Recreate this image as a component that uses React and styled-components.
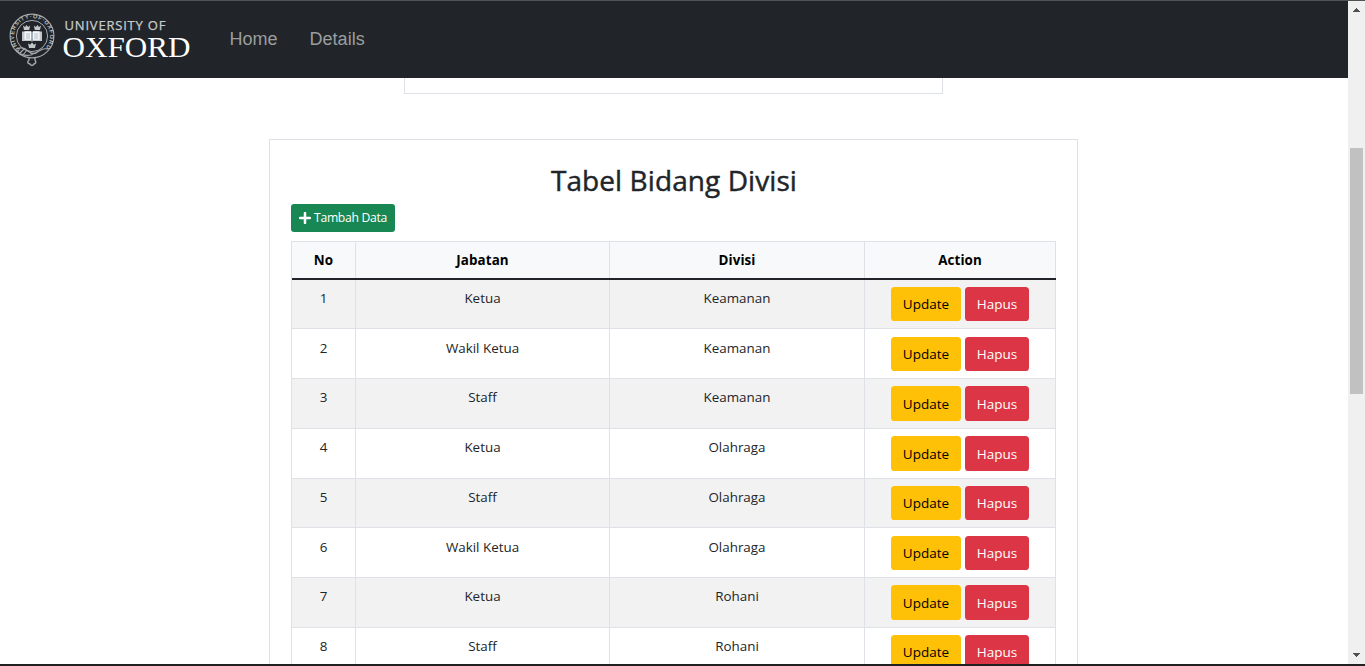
import React from 'react';
import styled, { createGlobalStyle } from 'styled-components';

const GlobalStyle = createGlobalStyle`
  *, *::before, *::after { box-sizing: border-box; }
  html, body { margin: 0; height: 666px; overflow: hidden; background: #fff; }
`;

const Window = styled.div`
  display: flex;
  flex-direction: column;
  width: 1365px;
  height: 666px;
  overflow: hidden;
  border-top: 1px solid #505254;
  border-bottom: 2px solid #212023;
  background: #fff;
  color: #212529;
  font-family: 'Open Sans', 'Noto Sans', sans-serif;
  font-size: 13.4px;
`;

const Viewport = styled.div`
  display: flex;
  flex: 1;
  min-height: 0;
`;

const Page = styled.div`
  display: flex;
  flex-direction: column;
  flex: 1;
  min-width: 0;
`;

const Navbar = styled.nav`
  display: flex;
  flex: none;
  align-items: center;
  height: 77px;
  padding-left: 9px;
  background: #212529;
`;

const Brand = styled.svg`
  display: block;
  flex: none;
  width: 189px;
  height: 77px;
`;

const NavLinks = styled.div`
  display: flex;
  gap: 32px;
  padding-left: 31.6px;
`;

const NavLink = styled.a`
  color: #9b9d9e;
  font: 18px/27px 'Liberation Sans', Arial, sans-serif;
`;

const Content = styled.main`
  display: flex;
  flex-direction: column;
  flex: 1;
  min-height: 0;
  overflow: hidden;
`;

const PreviousCard = styled.div`
  flex: none;
  width: 539px;
  height: 16px;
  margin-left: 404px;
  border: 1px solid #dee2e6;
  border-top: 0;
`;

const Card = styled.section`
  flex: none;
  width: 809px;
  height: 700px;
  margin: 45px 0 0 269px;
  padding: 22px 21px 0;
  border: 1px solid #dee2e6;
`;

const Title = styled.h1`
  height: 36px;
  margin: 0;
  padding-left: 1px;
  font-size: 28px;
  font-weight: 500;
  line-height: 36px;
  letter-spacing: 0.08px;
  text-align: center;
  -webkit-text-stroke: 0.45px #212529;
`;

const AddButton = styled.button`
  display: flex;
  align-items: center;
  gap: 3px;
  width: 104px;
  height: 28px;
  margin: 6px 0 9px;
  padding: 0 0 1px 8px;
  border: 0;
  border-radius: 3px;
  background: #198754;
  color: #fff;
  font: 12.2px/18px 'Open Sans', sans-serif;
  letter-spacing: -0.3px;
  white-space: nowrap;
`;

const Table = styled.div`
  width: 765px;
  border-left: 1px solid #dee2e6;
`;

const Row = styled.div`
  display: grid;
  grid-template-columns: 64px 254px 255px 191px;
  height: 49.72px;
  border-bottom: 1px solid #dee2e6;
  background: ${(p) => (p.$striped ? '#f2f2f2' : '#fff')};
`;

const HeadRow = styled(Row)`
  height: 38.75px;
  border-top: 1px solid #dee2e6;
  border-bottom: 2px solid #212529;
  background: #f8f9fa;
  color: #000;
  font-weight: 700;
  letter-spacing: 0.1px;
`;

const Cell = styled.div`
  padding: 8.3px 0 0;
  border-right: 1px solid #dee2e6;
  line-height: 21.6px;
  text-align: center;
`;

const ActionCell = styled(Cell)`
  display: flex;
  justify-content: center;
  gap: 4px;
  padding-top: 7.3px;
`;

const ActionButton = styled.button`
  width: ${(p) => (p.$danger ? '64px' : '70px')};
  height: 34.4px;
  padding: 1.9px 0 0;
  border: 0;
  border-radius: 3.6px;
  background: ${(p) => (p.$danger ? '#dc3545' : '#ffc107')};
  color: ${(p) => (p.$danger ? '#fff' : '#000')};
  font: 13.5px/21.6px 'Open Sans', sans-serif;
`;

const Scrollbar = styled.div`
  display: flex;
  flex: none;
  flex-direction: column;
  align-items: center;
  width: 17px;
  background: #f0f0f0;
`;

const ScrollArrow = styled.svg`
  display: block;
  width: 17px;
  height: 17px;
`;

const ScrollThumb = styled.div`
  width: 13px;
  height: 246px;
  margin: 130px 0 253px;
  background: #c1c1c1;
`;

function Logo() {
  return (
    <Brand viewBox="9 1 189 77" aria-label="University of Oxford">
      <defs>
        <path id="ring" d="M20.2 49.7 A18 18 0 1 1 44.3 49.2" />
      </defs>
      <g fill="none" stroke="#a4a8ac">
        <circle cx="32" cy="36" r="21.9" strokeWidth="1.1" />
        <circle cx="32" cy="36" r="15.6" strokeWidth="1" />
        <path d="M17 49 q6 -3 11 2 q5 5 11 0 q4 -3 9 -2 M16 50 q6 7 15 5 l12 -6 M20 53 l4 -4 m-1 6 l4 -5" strokeWidth="1.2" />
        <path d="M29 57 v3 q-3 3 1 4 q2 3 4 0 q3 -1 1 -4 v-3" strokeWidth="1.4" />
      </g>
      <text fill="#b9bcbf" fontFamily="Liberation Sans, sans-serif" fontSize="5.6" fontWeight="700">
        <textPath href="#ring" textLength="84">UNIVERSITY·OF·OXFORD</textPath>
      </text>
      <g fill="#c4c7ca">
        <path d="M23 25.5 l2 1.6 1.6 -2 1.6 2 2 -1.6 -1 4.6 h-5.2z" />
        <path d="M33.8 25.5 l2 1.6 1.6 -2 1.6 2 2 -1.6 -1 4.6 h-5.2z" />
        <path d="M28 43.2 l2 1.6 2 -2.2 2 2.2 2 -1.6 -1 4.8 h-6z" />
        <path d="M22 31.5 h9 l1 .7 1 -.7 h9 v9.5 h-9 l-1 .8 -1 -.8 h-9z" />
        <path d="M24.5 31.3 h6.8 v8.5 h-6.8z M32.8 31.3 h6.8 v8.5 h-6.8z" fill="#f5f8fa" />
      </g>
      <path d="M32 32 v9" stroke="#536b83" strokeWidth="0.7" />
      <path d="M26 34 h4 M26 36 h4 M26 38 h4 M34.2 34 h4 M34.2 36 h4 M34.2 38 h4" stroke="#8fa5b8" strokeWidth="0.7" />
      <text x="64.5" y="29.7" fill="#c9cbcd" stroke="#c9cbcd" strokeWidth="0.25" fontFamily="Open Sans, sans-serif" fontSize="13" textLength="101">UNIVERSITY OF</text>
      <text x="62.5" y="57.4" fill="#fff" fontFamily="Liberation Serif, serif" fontSize="29" textLength="128" lengthAdjust="spacingAndGlyphs">OXFORD</text>
    </Brand>
  );
}

function PlusIcon() {
  return (
    <svg width="12" height="12" viewBox="0 0 12 12">
      <path d="M6 1 v10 M1 6 h10" stroke="#fff" strokeWidth="2.5" strokeLinecap="round" />
    </svg>
  );
}

const rows = [
  ['Ketua', 'Keamanan'],
  ['Wakil Ketua', 'Keamanan'],
  ['Staff', 'Keamanan'],
  ['Ketua', 'Olahraga'],
  ['Staff', 'Olahraga'],
  ['Wakil Ketua', 'Olahraga'],
  ['Ketua', 'Rohani'],
  ['Staff', 'Rohani'],
];

export default function App() {
  return (
    <Window>
      <GlobalStyle />
      <Viewport>
        <Page>
          <Navbar>
            <Logo />
            <NavLinks>
              <NavLink>Home</NavLink>
              <NavLink>Details</NavLink>
            </NavLinks>
          </Navbar>
          <Content>
            <PreviousCard />
            <Card>
              <Title>Tabel Bidang Divisi</Title>
              <AddButton>
                <PlusIcon />
                Tambah Data
              </AddButton>
              <Table>
                <HeadRow>
                  <Cell>No</Cell>
                  <Cell>Jabatan</Cell>
                  <Cell>Divisi</Cell>
                  <Cell>Action</Cell>
                </HeadRow>
                {rows.map(([position, division], i) => (
                  <Row key={i} $striped={i % 2 === 0}>
                    <Cell>{i + 1}</Cell>
                    <Cell>{position}</Cell>
                    <Cell>{division}</Cell>
                    <ActionCell>
                      <ActionButton>Update</ActionButton>
                      <ActionButton $danger>Hapus</ActionButton>
                    </ActionCell>
                  </Row>
                ))}
              </Table>
            </Card>
          </Content>
        </Page>
        <Scrollbar>
          <ScrollArrow viewBox="0 0 17 17" shapeRendering="crispEdges">
            <path d="M5 11 h7 v-1 h-1 v-1 h-1 v-1 h-1 v-1 h-1 v1 h-1 v1 h-1 v1 h-1z" fill="#505050" />
          </ScrollArrow>
          <ScrollThumb />
          <ScrollArrow viewBox="0 0 17 17" shapeRendering="crispEdges">
            <path d="M5 6 h7 v1 h-1 v1 h-1 v1 h-1 v1 h-1 v-1 h-1 v-1 h-1 v-1 h-1z" fill="#505050" />
          </ScrollArrow>
        </Scrollbar>
      </Viewport>
    </Window>
  );
}
